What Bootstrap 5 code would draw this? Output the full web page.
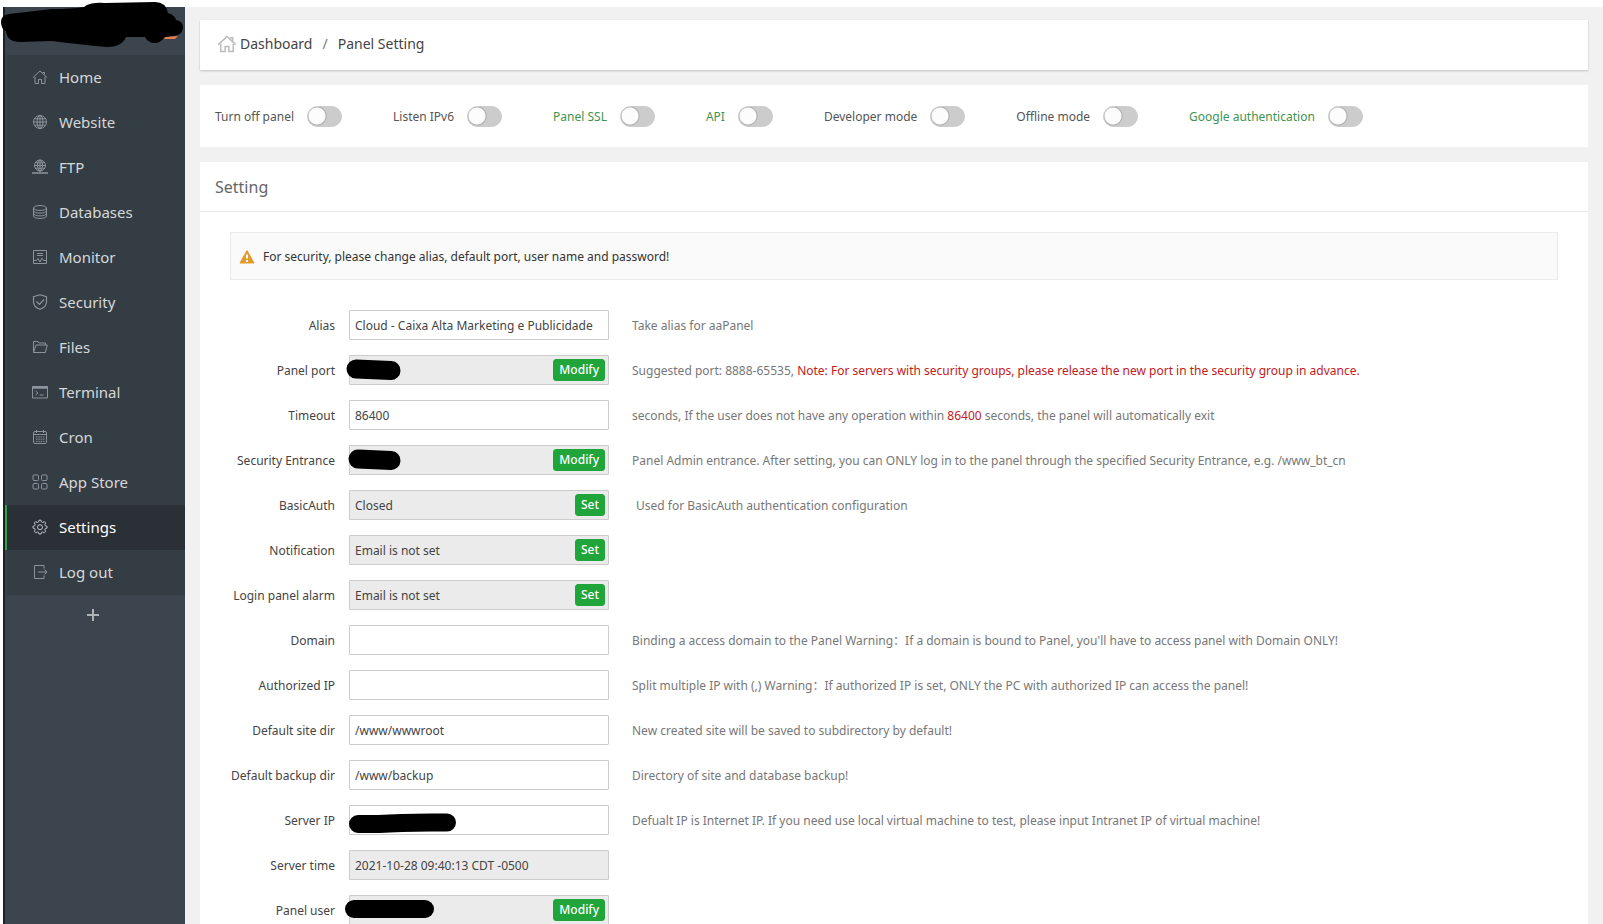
<!DOCTYPE html>
<html lang="en">
<head>
<meta charset="utf-8">
<meta name="viewport" content="width=device-width, initial-scale=1">
<title>Panel Setting</title>
<link href="https://cdn.jsdelivr.net/npm/bootstrap@5.3.0/dist/css/bootstrap.min.css" rel="stylesheet">
<style>
body{font-family:"Noto Sans","Noto Sans CJK SC",sans-serif;font-size:12px;line-height:20px;color:#444;background:#fff}
.shell{height:100vh;padding:7px 0 0 3px}
.sidebar{width:182px;background:#3c444d;border-left:2px solid #1b2227}
.brand{height:48px;position:relative}
.brand svg{position:absolute;left:-5px;top:-7px}
.menu{background:#353d44}
.menu a{height:45px;padding:0 0 2px 25px;gap:11px;border-left:2px solid #3a434a;color:#d5d8da;font-size:15px;text-decoration:none}
.menu a.active{background:#2b3036;border-left-color:#35a04a;color:#fff}
.menu svg,.crumbs svg{fill:none;stroke:#8d9499;stroke-width:1}
.menu a.active svg{stroke:#c5c9cb}
.add-btn{height:40px;color:#aeb3b6}
.content-area{background:#f1f1f1;padding:13px 15px 0 15px;gap:15px}
.panel-box{background:#fff}
.crumbs{height:50px;padding:0 0 2px 17px;font-size:14px;box-shadow:0 1px 2px rgba(0,0,0,.2);flex:none}
.crumbs a{margin-left:3px;color:#444;text-decoration:none}
.crumbs .divider{padding:0 10px;color:#777}
.crumbs svg{stroke:#bbb}
.switches{height:62px;padding-left:15px;column-gap:51px;flex:none}
.switches .form-check-label{padding-top:1px;color:#555}
.switches .green-text{color:#3f9350}
.switches .form-check{gap:13px;min-height:0;padding:0;margin:0}
.switches .form-check-input{width:35px;height:21px;margin:0;border:1px solid #ccc;background-color:#ccc;background-image:radial-gradient(circle at 9px 9px,#fcfcfc 8px,#aaa 9px,#ccc 10px);background-position:0 0;background-size:100% 100%}
.panel-title{height:50px;padding-left:15px;font-size:16px;line-height:24px;color:#666;border-bottom:1px solid #e8e8e8;margin:0;font-weight:400}
.notice{margin:20px 30px 30px;height:48px;padding:2px 0 0 8px;gap:8px;background:#fafafa;border:1px solid #ebebeb;color:#333}
.setting-row{height:30px;margin-bottom:15px}
.setting-row label{width:135px;padding-top:2px;text-align:right;margin-right:14px;flex:none;color:#444}
.field{width:260px;margin-right:23px;position:relative;flex:none}
.field .form-control{height:30px;padding:0 5px;font-size:12px;line-height:20px;color:#444;border:1px solid #ccc;border-radius:1px}
.field .form-control[readonly]{background:#ebebeb}
.field .btn{position:absolute;right:4px;top:4px;height:22px;padding:0 5px;font-size:12px;line-height:20px;font-weight:500;color:#fff;background:#20a53a;border:1px solid #20a53a;border-radius:3px}
.field svg{position:absolute;left:-5px;top:0;pointer-events:none}
.help{padding-top:2px;color:#777;white-space:pre}
.note{color:#c2201c}
</style>
</head>
<body>
<div class="shell d-flex overflow-hidden">
<nav class="sidebar flex-shrink-0">
  <div class="brand">
    <svg width="184" height="50" viewBox="0 0 184 50"><path d="M1 22Q1 15 9 14L52 9Q72 9 84 7Q90 2 105 3L155 2Q166 2 168 13Q175 15 176 20Q183 21 183 28Q182 36 172 36L164 38Q160 43 155 43Q148 43 145 37H126Q122 47 107 47Q85 45 52 41L20 42Q7 42 6 31Q1 29 1 22Z" fill="#000"/><path d="M165 37L178 36 175 39H164z" fill="#e87a4b"/></svg>
  </div>
  <div class="menu d-flex flex-column">
    <a href="#" class="d-flex align-items-center"><svg width="16" height="16" viewBox="0 0 16 16"><path d="M1 8.500L8 2l7 6.500M3 8v6.500h3.500v-4h3v4H13V8M10.500 3.500h2v2"/></svg>Home</a>
    <a href="#" class="d-flex align-items-center"><svg width="16" height="16" viewBox="0 0 16 16"><circle cx="8" cy="8" r="6.500"/><ellipse cx="8" cy="8" rx="3" ry="6.500"/><path d="M8 1.500v13M1.500 8h13M2.500 4.800h11M2.500 11.200h11"/></svg>Website</a>
    <a href="#" class="d-flex align-items-center"><svg width="16" height="16" viewBox="0 0 16 16"><circle cx="8" cy="6.500" r="5.500"/><ellipse cx="8" cy="6.500" rx="2.500" ry="5.500"/><path d="M8 1v12M2.500 6.500h11M3.500 3.800h9M3.500 9.200h9"/><path d="M0 14h16M6 14h4" stroke-width="1.500"/></svg>FTP</a>
    <a href="#" class="d-flex align-items-center"><svg width="16" height="16" viewBox="0 0 16 16"><ellipse cx="8" cy="4" rx="6.500" ry="2.500"/><path d="M1.500 4v8c0 3.300 13 3.300 13 0V4M1.500 6.700c0 3.300 13 3.300 13 0M1.500 9.400c0 3.300 13 3.300 13 0"/></svg>Databases</a>
    <a href="#" class="d-flex align-items-center"><svg width="16" height="16" viewBox="0 0 16 16"><path d="M1.500 1.500h13v13h-13zM5 4.500h6M5 6.500h6M1.500 11.500h3l1.500-2 2 3.500 2-4 1.500 2.500h3"/></svg>Monitor</a>
    <a href="#" class="d-flex align-items-center"><svg width="16" height="16" viewBox="0 0 16 16"><path d="M8 .8l6.500 2V8c0 3.500-3 6-6.500 7.300C4.500 14 1.500 11.500 1.500 8V2.800zM4.500 7.500l3 3 4.500-5" stroke-width="1.200"/></svg>Security</a>
    <a href="#" class="d-flex align-items-center"><svg width="16" height="16" viewBox="0 0 16 16"><path d="M1.500 13.500v-11H6l1 1.500h6.500v2M1.500 13.500L4 6h11.300l-2 7.500z"/></svg>Files</a>
    <a href="#" class="d-flex align-items-center"><svg width="16" height="16" viewBox="0 0 16 16"><path d="M.5 2.500h15v11.500H.5zM3.500 7l2.500 2-2.500 2M7.500 11h4"/><path d="M.5 3.500h15" stroke-width="2.500"/></svg>Terminal</a>
    <a href="#" class="d-flex align-items-center"><svg width="16" height="16" viewBox="0 0 16 16"><rect x="1.500" y="2.500" width="13" height="12" rx="1.500"/><path d="M1.500 5.500h13M4.500 1v3M11.500 1v3"/><path d="M4 8h8.500M4 10.200h8.500M4 12.400h8.500" stroke-dasharray="1.500 .8"/></svg>Cron</a>
    <a href="#" class="d-flex align-items-center"><svg width="16" height="16" viewBox="0 0 16 16" stroke-width="1.300"><rect x="1" y="1" width="5.500" height="5.500" rx="1"/><rect x="9.500" y="1" width="5.500" height="5.500" rx="1"/><rect x="1" y="9.500" width="5.500" height="5.500" rx="1"/><rect x="9.500" y="9.500" width="5.500" height="5.500" rx="1"/></svg>App Store</a>
    <a href="#" class="d-flex align-items-center active" aria-current="page"><svg width="16" height="16" viewBox="0 0 16 16"><path d="M6.500 3L7 1.200h2L9.500 3l1.200.5 1.600-.9 1.400 1.400-.9 1.600.5 1.200 1.700.5v1.800l-1.700.5-.5 1.200.9 1.600-1.400 1.400-1.600-.9-1.200.5-.5 1.600H7l-.5-1.600-1.200-.5-1.600.9-1.400-1.400.9-1.600-.5-1.200L1 9.100V7.300l1.700-.5.5-1.200L2.300 4l1.400-1.400 1.600.9z"/><circle cx="8" cy="8.200" r="2.500"/></svg>Settings</a>
    <a href="#" class="d-flex align-items-center"><svg width="16" height="16" viewBox="0 0 16 16"><path d="M12 4.500v-3H2.500v13H12v-3M6 8h9M12.500 5.500L15 8l-2.500 2.500"/></svg>Log out</a>
  </div>
  <button type="button" class="add-btn btn w-100 p-0 pe-1 border-0 d-flex align-items-center justify-content-center" aria-label="Add"><svg width="14" height="14" viewBox="0 0 14 14" stroke="currentColor" stroke-width="2"><path d="M7 1v12M1 7h12"/></svg></button>
</nav>
<main class="content-area flex-grow-1 d-flex flex-column">
  <nav class="panel-box crumbs d-flex align-items-center" aria-label="breadcrumb">
    <svg width="20" height="20" viewBox="0 0 16 16"><path d="M1 8.500L8 2l7 6.500M3 8v6h3.500v-4h3v4H13V8M10.500 3h2v2.500" stroke-width="1.200"/></svg>
    <a href="#">Dashboard</a><span class="divider">/</span><span>Panel Setting</span>
  </nav>
  <section class="panel-box switches d-flex align-items-center">
    <div class="form-check form-switch d-flex align-items-center"><label class="form-check-label" for="s1">Turn off panel</label><input class="form-check-input" type="checkbox" id="s1"></div>
    <div class="form-check form-switch d-flex align-items-center"><label class="form-check-label" for="s2">Listen IPv6</label><input class="form-check-input" type="checkbox" id="s2"></div>
    <div class="form-check form-switch d-flex align-items-center"><label class="form-check-label green-text" for="s3">Panel SSL</label><input class="form-check-input" type="checkbox" id="s3"></div>
    <div class="form-check form-switch d-flex align-items-center"><label class="form-check-label green-text" for="s4">API</label><input class="form-check-input" type="checkbox" id="s4"></div>
    <div class="form-check form-switch d-flex align-items-center"><label class="form-check-label" for="s5">Developer mode</label><input class="form-check-input" type="checkbox" id="s5"></div>
    <div class="form-check form-switch d-flex align-items-center"><label class="form-check-label" for="s6">Offline mode</label><input class="form-check-input" type="checkbox" id="s6"></div>
    <div class="form-check form-switch d-flex align-items-center"><label class="form-check-label green-text" for="s7">Google authentication</label><input class="form-check-input" type="checkbox" id="s7"></div>
  </section>
  <section class="panel-box flex-grow-1">
    <h1 class="panel-title d-flex align-items-center">Setting</h1>
    <div class="notice d-flex align-items-center"><svg width="16" height="16" viewBox="0 0 16 16"><path d="M8 1.500L15 14H1z" fill="#e39a2d" stroke="#e39a2d" stroke-linejoin="round"/><path d="M8 5.500v4M8 11v2" stroke="#fff" stroke-width="2"/></svg><span>For security, please change alias, default port, user name and password!</span></div>
    <form>
      <div class="setting-row d-flex align-items-center"><label for="f1">Alias</label><div class="field"><input class="form-control" id="f1" value="Cloud - Caixa Alta Marketing e Publicidade"></div><span class="help">Take alias for aaPanel</span></div>
      <div class="setting-row d-flex align-items-center"><label for="f2">Panel port</label><div class="field"><input class="form-control" id="f2" readonly><svg width="64" height="30"><path d="M12 14L47 15.500" stroke="#000" stroke-width="19" stroke-linecap="round"/></svg><button type="button" class="btn">Modify</button></div><span class="help">Suggested port: 8888-65535, <span class="note">Note: For servers with security groups, please release the new port in the security group in advance.</span></span></div>
      <div class="setting-row d-flex align-items-center"><label for="f3">Timeout</label><div class="field"><input class="form-control" id="f3" value="86400"></div><span class="help">seconds, If the user does not have any operation within <span class="note">86400</span> seconds, the panel will automatically exit</span></div>
      <div class="setting-row d-flex align-items-center"><label for="f4">Security Entrance</label><div class="field"><input class="form-control" id="f4" readonly><svg width="64" height="30"><path d="M14 14L47 15.500" stroke="#000" stroke-width="19" stroke-linecap="round"/></svg><button type="button" class="btn">Modify</button></div><span class="help">Panel Admin entrance. After setting, you can ONLY log in to the panel through the specified Security Entrance, e.g. /www_bt_cn</span></div>
      <div class="setting-row d-flex align-items-center"><label for="f5">BasicAuth</label><div class="field"><input class="form-control" id="f5" value="Closed" readonly><button type="button" class="btn">Set</button></div><span class="help ps-1">Used for BasicAuth authentication configuration</span></div>
      <div class="setting-row d-flex align-items-center"><label for="f6">Notification</label><div class="field"><input class="form-control" id="f6" value="Email is not set" readonly><button type="button" class="btn">Set</button></div></div>
      <div class="setting-row d-flex align-items-center"><label for="f7">Login panel alarm</label><div class="field"><input class="form-control" id="f7" value="Email is not set" readonly><button type="button" class="btn">Set</button></div></div>
      <div class="setting-row d-flex align-items-center"><label for="f8">Domain</label><div class="field"><input class="form-control" id="f8"></div><span class="help">Binding a access domain to the Panel Warning：If a domain is bound to Panel, you'll have to access panel with Domain ONLY!</span></div>
      <div class="setting-row d-flex align-items-center"><label for="f9">Authorized IP</label><div class="field"><input class="form-control" id="f9"></div><span class="help">Split multiple IP with (,) Warning：If authorized IP is set, ONLY the PC with authorized IP can access the panel!</span></div>
      <div class="setting-row d-flex align-items-center"><label for="f10">Default site dir</label><div class="field"><input class="form-control" id="f10" value="/www/wwwroot"></div><span class="help">New created site will be saved to subdirectory by default!</span></div>
      <div class="setting-row d-flex align-items-center"><label for="f11">Default backup dir</label><div class="field"><input class="form-control" id="f11" value="/www/backup"></div><span class="help">Directory of site and database backup!</span></div>
      <div class="setting-row d-flex align-items-center"><label for="f12">Server IP</label><div class="field"><input class="form-control" id="f12"><svg width="120" height="30"><path d="M14 19H35Q60 17 103 17.500" fill="none" stroke="#000" stroke-width="18" stroke-linecap="round"/></svg></div><span class="help">Defualt IP is Internet IP. If you need use local virtual machine to test, please input Intranet IP of virtual machine!</span></div>
      <div class="setting-row d-flex align-items-center"><label for="f13">Server time</label><div class="field"><input class="form-control" id="f13" value="2021-10-28 09:40:13 CDT -0500" readonly></div></div>
      <div class="setting-row d-flex align-items-center"><label for="f14">Panel user</label><div class="field"><input class="form-control" id="f14" readonly><svg width="100" height="30"><path d="M10 14H81" stroke="#000" stroke-width="18" stroke-linecap="round"/></svg><button type="button" class="btn">Modify</button></div></div>
    </form>
  </section>
</main>
</div>
<script src="https://cdn.jsdelivr.net/npm/bootstrap@5.3.0/dist/js/bootstrap.bundle.min.js"></script>
</body>
</html>
